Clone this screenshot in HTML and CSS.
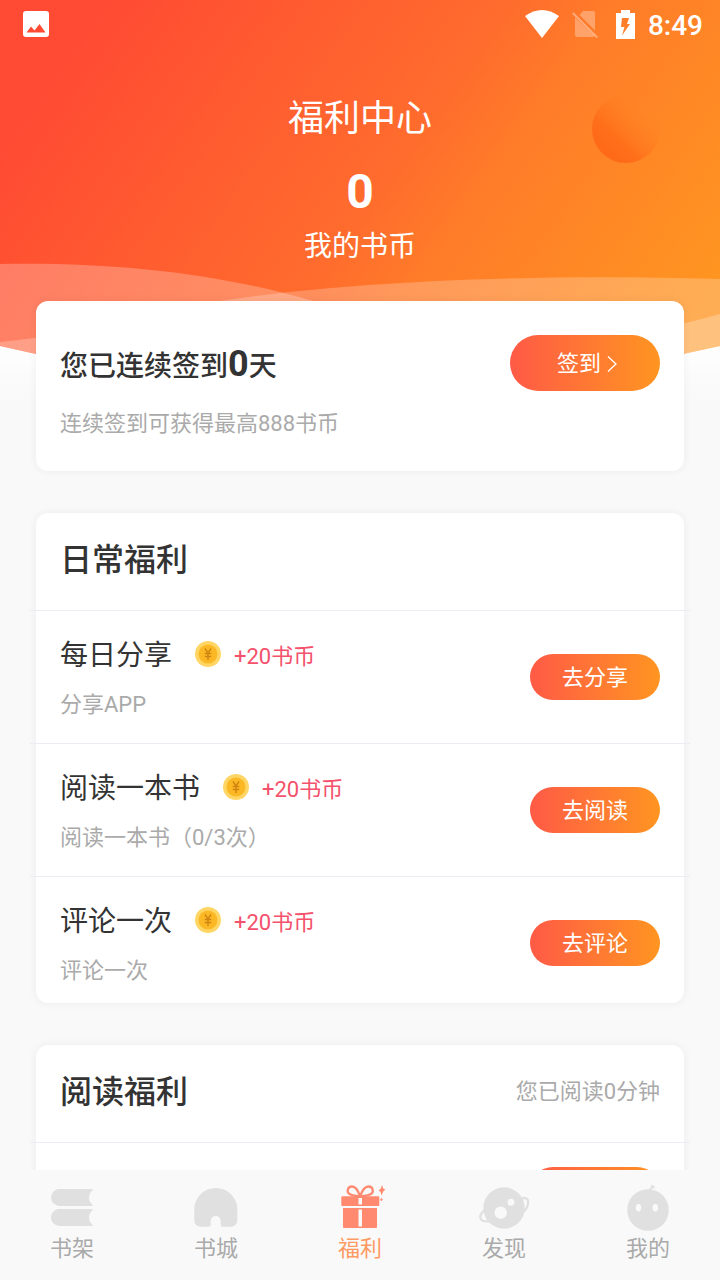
FILE: index.html
```html
<!DOCTYPE html>
<html lang="zh-CN">
<head>
<meta charset="utf-8">
<meta name="viewport" content="width=device-width, initial-scale=1">
<title>福利中心</title>
<link rel="stylesheet" href="styles.css">
</head>
<body>
<div class="app">
  <main class="page">
    <svg class="backdrop" viewBox="0 0 720 400" preserveAspectRatio="none" aria-hidden="true">
      <defs>
        <linearGradient id="sky" gradientUnits="userSpaceOnUse" x1="75" y1="52" x2="615" y2="428">
          <stop offset="0" stop-color="#ff4b33"/>
          <stop offset=".5" stop-color="#ff6c2d"/>
          <stop offset=".62" stop-color="#ff7b29"/>
          <stop offset="1" stop-color="#ff9521"/>
        </linearGradient>
        <linearGradient id="moon" x1=".3" y1=".85" x2=".95" y2=".2">
          <stop offset="0" stop-color="#ff6a19"/>
          <stop offset=".2" stop-color="#ff6f1b"/>
          <stop offset="1" stop-color="#ff8a24" stop-opacity="0"/>
        </linearGradient>
        <linearGradient id="fade" x1="0" y1="0" x2="0" y2="1">
          <stop offset=".85" stop-color="#fff"/>
          <stop offset="1" stop-color="#f9f9f9"/>
        </linearGradient>
        <clipPath id="dome"><path d="M0 0H720V346Q360 430 0 346Z"/></clipPath>
      </defs>
      <rect width="720" height="400" fill="url(#fade)"/>
      <g clip-path="url(#dome)">
        <rect width="720" height="400" fill="url(#sky)"/>
        <path d="M0 264C120 262 220 274 313 301C450 345 600 350 720 314V400H0Z" fill="#fff" fill-opacity=".25"/>
        <path d="M0 342C90 333 150 313 220 301C330 284 500 273 720 279V400H0Z" fill="#fff" fill-opacity=".23"/>
      </g>
      <circle cx="626" cy="129" r="34" fill="url(#moon)"/>
    </svg>

    <div class="status">
      <svg class="status-photo" viewBox="0 0 26 26" aria-hidden="true"><path fill="#fff" fill-rule="evenodd" d="M3 0H23a3 3 0 0 1 3 3V23a3 3 0 0 1-3 3H3a3 3 0 0 1-3-3V3a3 3 0 0 1 3-3ZM3.500 21.500H22.500L16.500 13L11.500 19.500L8 15.500Z"/></svg>
      <div class="status-right">
        <svg class="status-wifi" viewBox="0 0 34 28" aria-hidden="true"><path fill="#fff" d="M0 6Q17-6 34 6L17 28Z"/></svg>
        <svg class="status-sim" viewBox="0 0 26 28" aria-hidden="true"><g fill="#fff" fill-opacity=".3"><path d="M11 1H21a2 2 0 0 1 2 2V20.500L7.500 5Z"/><path d="M3 7.500L22.500 26Q22 27 20 27H5.500A2.500 2.500 0 0 1 3 24.500Z"/></g><path d="M.8 3L25.200 27.500" stroke="#fff" stroke-opacity=".38" stroke-width="2"/></svg>
        <svg class="status-battery" viewBox="0 0 19 29" aria-hidden="true"><path fill="#fff" fill-rule="evenodd" d="M5 0H14V3H19V29H0V3H5ZM6 8L5 17H8.500L6 25.500L14 14H11L13 8Z"/></svg>
        <span class="clock">8:49</span>
      </div>
    </div>

    <header class="hero">
      <h1 class="hero-title">福利中心</h1>
      <strong class="hero-count">0</strong>
      <span class="hero-label">我的书币</span>
    </header>

    <div class="cards">
      <section class="card signin">
        <div class="signin-row">
          <h2 class="signin-title">您已连续签到<b class="signin-days">0</b>天</h2>
          <button class="btn btn-large" type="button">签到<svg class="arrow" viewBox="0 0 10 18" aria-hidden="true"><path d="M1 1.500L9 9L1 16.500" fill="none" stroke="#fff" stroke-width="1.300"/></svg></button>
        </div>
        <p class="note">连续签到可获得最高888书币</p>
      </section>

      <section class="card">
        <div class="card-head"><h2 class="card-title">日常福利</h2></div>
        <ul class="tasks">
          <li class="task">
            <div class="task-text">
              <div class="task-line"><h3 class="task-name">每日分享</h3><svg class="coin" viewBox="0 0 26 26" aria-hidden="true"><circle cx="13" cy="13" r="13" fill="#ffd665"/><circle cx="13" cy="13" r="9.500" fill="#fbb824"/><path d="M10 7.500L13 12L16 7.500M13 12V19M9.800 12.500H16.200M9.800 15.500H16.200" fill="none" stroke="#cf8412" stroke-width="1.400"/></svg><span class="reward">+20书币</span></div>
              <p class="note">分享APP</p>
            </div>
            <button class="btn" type="button">去分享</button>
          </li>
          <li class="task">
            <div class="task-text">
              <div class="task-line"><h3 class="task-name">阅读一本书</h3><svg class="coin" viewBox="0 0 26 26" aria-hidden="true"><circle cx="13" cy="13" r="13" fill="#ffd665"/><circle cx="13" cy="13" r="9.500" fill="#fbb824"/><path d="M10 7.500L13 12L16 7.500M13 12V19M9.800 12.500H16.200M9.800 15.500H16.200" fill="none" stroke="#cf8412" stroke-width="1.400"/></svg><span class="reward">+20书币</span></div>
              <p class="note">阅读一本书（0/3次）</p>
            </div>
            <button class="btn" type="button">去阅读</button>
          </li>
          <li class="task">
            <div class="task-text">
              <div class="task-line"><h3 class="task-name">评论一次</h3><svg class="coin" viewBox="0 0 26 26" aria-hidden="true"><circle cx="13" cy="13" r="13" fill="#ffd665"/><circle cx="13" cy="13" r="9.500" fill="#fbb824"/><path d="M10 7.500L13 12L16 7.500M13 12V19M9.800 12.500H16.200M9.800 15.500H16.200" fill="none" stroke="#cf8412" stroke-width="1.400"/></svg><span class="reward">+20书币</span></div>
              <p class="note">评论一次</p>
            </div>
            <button class="btn" type="button">去评论</button>
          </li>
        </ul>
      </section>

      <section class="card">
        <div class="card-head"><h2 class="card-title">阅读福利</h2><span class="note">您已阅读0分钟</span></div>
        <div class="reading"><button class="btn" type="button"></button></div>
      </section>
    </div>
  </main>

  <nav class="tabs">
    <a class="tab" href="#shelf">
      <svg class="tab-icon" viewBox="0 0 56 48" aria-hidden="true"><path fill="#e0e0e0" d="M15.500 5H48.500V6.500Q45 9 45 13.500T48.500 20.500V22H15.500A8.500 8.500 0 0 1 15.500 5ZM15.500 25H48.500V26.500Q45 29 45 33.500T48.500 40.500V42H15.500A8.500 8.500 0 0 1 15.500 25Z"/></svg>
      <span>书架</span>
    </a>
    <a class="tab" href="#store">
      <svg class="tab-icon" viewBox="0 0 56 48" aria-hidden="true"><path fill="#e0e0e0" d="M6.300 25A21.500 21 0 0 1 49.300 25V35.500Q49.300 42.700 42 42.700H35Q32.700 42.700 32.700 40.500V37A5 5 0 0 0 22.700 37V40.500Q22.700 42.700 20.500 42.700H13.500Q6.300 42.700 6.300 35.500Z"/></svg>
      <span>书城</span>
    </a>
    <a class="tab tab-active" href="#welfare" aria-current="page">
      <svg class="tab-icon" viewBox="0 0 56 48" aria-hidden="true"><g fill="#ff8a70"><path fill-rule="evenodd" d="M10.300 12.300H46.300Q47.300 12.300 47.300 13.300V21Q47.300 22 46.300 22H10.300Q9.300 22 9.300 21V13.300Q9.300 12.300 10.300 12.300ZM26.500 14V20.500H30V14Z"/><path fill-rule="evenodd" d="M11 24H45V43Q45 44 44 44H12Q11 44 11 43ZM26.500 25.500V42.500H30V25.500Z"/><path d="M50 1L51.200 4.500L53.300 5.500L51.200 7.500L49.500 11.500L48.500 7.800L46.500 6.800L48.800 4.500ZM49.500 14L50.800 15.500L49.300 17.300L48 15.700Z"/></g><path d="M28 12.500Q25 2.500 20 2.500C15 2.500 15 8 17 9.700Q19 11.500 28 12.500Q37.500 11.500 39.500 9.700C41.500 8 41.500 2.500 36.500 2.500Q31.500 2.500 28 12.500" fill="none" stroke="#ff8a70" stroke-width="2.300"/></svg>
      <span>福利</span>
    </a>
    <a class="tab" href="#discover">
      <svg class="tab-icon" viewBox="0 0 56 48" aria-hidden="true"><path fill="none" stroke="#e0e0e0" stroke-width="2.300" d="M45 15C49 13 52 14 52.200 18Q52 23.500 47.500 28M9 26C5 29 3 32 5 35.500Q7.500 38.200 15 37"/><path fill="#e0e0e0" fill-rule="evenodd" d="M28 3.300A20.700 20.700 0 0 1 28 44.700A20.700 20.700 0 0 1 28 3.300ZM24.700 22.500A6.200 6.200 0 0 0 24.700 34.900A6.200 6.200 0 0 0 24.700 22.500ZM35 14.800A3.500 3.500 0 0 0 35 21.800A3.500 3.500 0 0 0 35 14.800Z"/></svg>
      <span>发现</span>
    </a>
    <a class="tab" href="#me">
      <svg class="tab-icon" viewBox="0 0 56 48" aria-hidden="true"><circle cx="28" cy="26" r="20.800" fill="#e0e0e0"/><g fill="#f9f9f9"><ellipse cx="18.500" cy="23.700" rx="2.700" ry="3.700"/><ellipse cx="35.300" cy="23.700" rx="2.700" ry="3.700"/></g><path d="M29 6Q32 4.500 32 2" fill="none" stroke="#e0e0e0" stroke-width="1.600"/><path d="M31 .5L35 2.800L34 4.500L31 4.500Z" fill="#e0e0e0"/></svg>
      <span>我的</span>
    </a>
  </nav>
</div>
</body>
</html>
```
FILE: styles.css
```css
* { box-sizing: border-box; }
body, h1, h2, h3, p, ul { margin: 0; padding: 0; font-weight: 400; }
body {
  font-family: Roboto, "Noto Sans CJK SC", sans-serif;
  color: #333;
  background: #f9f9f9;
}
.app { display: flex; flex-direction: column; height: 100vh; }
.page { position: relative; flex: 1; min-height: 0; overflow: hidden; }
.backdrop { position: absolute; top: 0; left: 0; z-index: -1; width: 100%; height: 400px; }

.status { display: flex; align-items: center; justify-content: space-between; height: 48px; padding: 0 17px 0 23px; }
.status svg { display: block; }
.status-right { display: flex; align-items: center; gap: 13px; }
.status-photo { width: 26px; height: 26px; }
.status-wifi { width: 34px; height: 28px; }
.status-sim { width: 26px; height: 28px; }
.status-battery { width: 19px; height: 29px; margin-left: 5px; }
.clock { padding-top: 3px; font-size: 28px; line-height: 45px; font-weight: 500; color: #fff; }

.hero { display: flex; flex-direction: column; align-items: center; padding: 45px 36px 34px; color: #fff; }
.hero-title { font-size: 36px; line-height: 52px; }
.hero-count { margin: 19px 0 7px; font-size: 48px; line-height: 56px; font-weight: 700; }
.hero-label { font-size: 28px; line-height: 40px; }

.cards { display: flex; flex-direction: column; gap: 42px; padding: 0 36px; }
.card { background: #fff; border-radius: 12px; box-shadow: 0 0 10px rgba(0, 0, 0, 0.06); }
.note { font-size: 22px; line-height: 32px; color: #aaa; }

.signin { padding: 34px 24px 31px; }
.signin-row { display: flex; align-items: center; justify-content: space-between; margin-bottom: 17px; }
.signin-title { padding-top: 4px; font-size: 28px; line-height: 48px; font-weight: 500; }
.signin-days { font-size: 36px; font-weight: 700; }

.btn {
  display: flex; align-items: center; justify-content: center; gap: 6px;
  width: 130px; height: 46px; padding: 2px 0 0; border: 0; border-radius: 28px;
  background: linear-gradient(90deg, #ff5a46, #ff9521);
  font: inherit; font-size: 22px; line-height: 32px; color: #fff;
}
.btn-large { width: 150px; height: 56px; padding-left: 4px; }
.arrow { width: 10px; height: 18px; }

.card-head { display: flex; align-items: center; justify-content: space-between; height: 97px; padding: 0 24px 4px; }
.card-title { font-size: 32px; line-height: 48px; font-weight: 500; }

.tasks { list-style: none; }
.task { display: flex; align-items: center; justify-content: space-between; height: 133px; margin: 0 -6px; padding: 0 30px; border-top: 1px solid #ececf2; }
.task:last-child { height: 127px; padding-top: 6px; }
.task-text { display: flex; flex-direction: column; gap: 13px; padding-top: 2px; }
.task-line { display: flex; align-items: flex-end; height: 40px; }
.task-name { font-size: 28px; line-height: 40px; }
.coin { width: 26px; height: 26px; margin: 0 13px 9px 23px; }
.reward { margin-bottom: 3px; font-size: 22px; line-height: 32px; color: #f4516c; }
.reading { display: flex; justify-content: flex-end; height: 133px; margin: 0 -6px; padding: 24px 30px; border-top: 1px solid #ececf2; }

.tabs { display: flex; height: 110px; background: #f9f9f9; }
.tab { flex: 1; display: flex; flex-direction: column; align-items: center; gap: 1px; padding-top: 14px; font-size: 22px; line-height: 32px; color: #aaa; text-decoration: none; }
.tab-icon { width: 56px; height: 48px; }
.tab-active { color: #ff9a62; }
```
